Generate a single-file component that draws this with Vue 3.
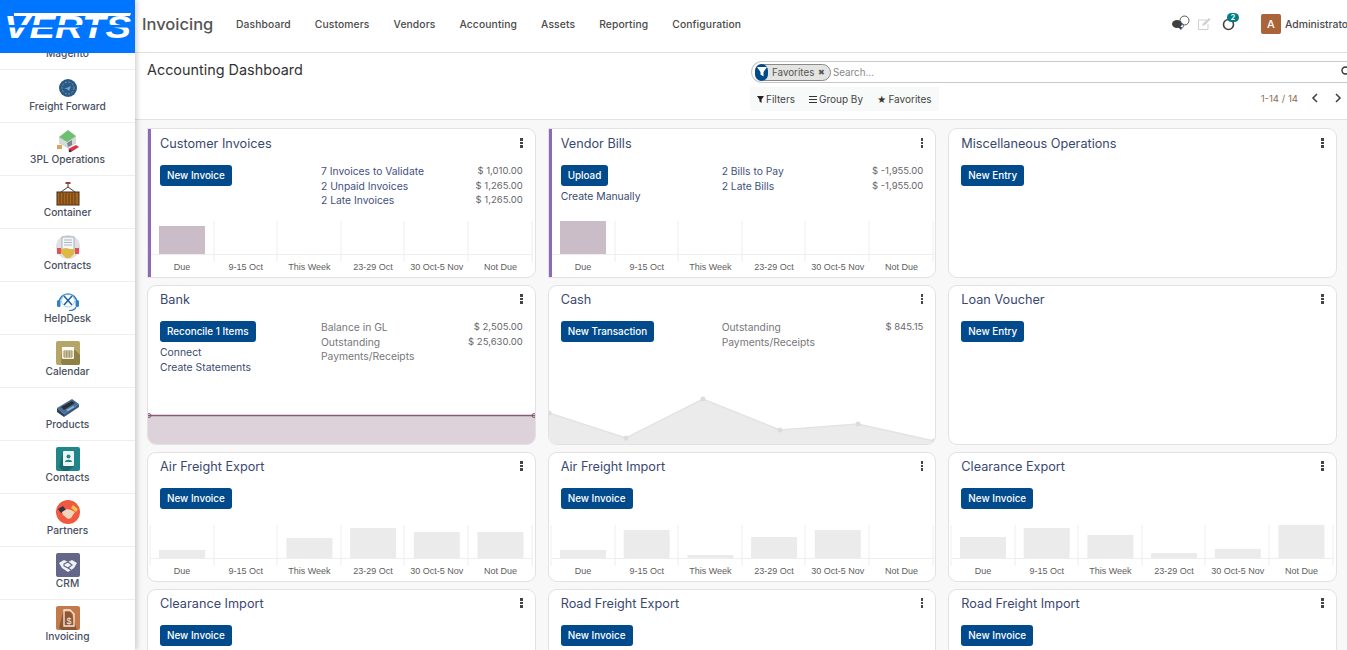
<template>
  <div class="app">
    <aside class="side">
      <div class="logo">
        <svg viewBox="0 0 135 53" width="135" height="53">
          <text x="4" y="38" textLength="127" lengthAdjust="spacingAndGlyphs" class="logo-text">VERTS</text>
          <rect x="0" y="25" width="135" height="2.500" fill="#0075ff" />
          <path d="M14 13h117l-1 3H14z" fill="#fff" />
        </svg>
      </div>
      <ul class="apps">
        <li v-for="item in apps" :key="item.name" class="app-item">
          <svg v-if="item.icon" class="app-icon" viewBox="0 0 24 24" width="24" height="24">
            <template v-if="item.icon === 'freight'">
              <circle cx="12" cy="12" r="9" fill="#245b8c" />
              <circle cx="12" cy="12" r="6" fill="none" stroke="#b59a68" stroke-width="0.8" stroke-dasharray="2 1.5" />
              <path d="M8 13l7-3-2 5-2-2z" fill="#7f9fbd" />
            </template>
            <template v-else-if="item.icon === '3pl'">
              <path d="M3 8l9-7 8 6v7l-8 5-9-5z" fill="#6fbf73" />
              <path d="M3 8l8 5 9-6v7l-8 5-9-5z" fill="#d5d9d8" />
              <path d="M11 14l5-3v5l-4 2z" fill="#7b8790" />
              <rect x="1" y="16" width="5" height="4" fill="#e0a255" />
              <path d="M12 20l8-4 3 2-8 5z" fill="#d8344a" />
              <circle cx="14" cy="22" r="1.3" fill="#333" />
            </template>
            <template v-else-if="item.icon === 'container'">
              <path d="M12 1v4M12 5L5 10M12 5l7 5" stroke="#4a3a32" stroke-width="1" fill="none" />
              <rect x="9.5" y="0" width="5" height="2" fill="#9c3f36" />
              <rect x="1" y="10" width="22" height="13" fill="#a8641f" stroke="#3a2a1c" />
              <path d="M4 11v11M7 11v11M10 11v11M13 11v11M16 11v11M19 11v11" stroke="#5f3a14" stroke-width="1" />
            </template>
            <template v-else-if="item.icon === 'contracts'">
              <circle cx="12" cy="12" r="12" fill="#dfe0e4" />
              <rect x="6" y="2" width="12" height="14" fill="#f5f6f7" stroke="#8a9aa8" stroke-width="0.7" />
              <path d="M8 5h8M8 7.5h8M8 10h8" stroke="#9fb0bd" stroke-width="0.9" />
              <rect x="1" y="13" width="4" height="6" fill="#e2505a" />
              <rect x="19" y="13" width="4" height="6" fill="#e2505a" />
              <path d="M5 14l5-1 4 1 5 0-1 5-4 4h-4l-5-5z" fill="#dcb845" />
            </template>
            <template v-else-if="item.icon === 'helpdesk'">
              <path d="M3 15a9 9 0 0 1 18 0" fill="none" stroke="#2f80c9" stroke-width="1.6" />
              <rect x="1" y="12" width="3.5" height="7" rx="1.5" fill="#2f80c9" />
              <rect x="19.5" y="12" width="3.5" height="7" rx="1.5" fill="#2f80c9" />
              <path d="M20 19c-1 3-4 3.500-7 3.500" fill="none" stroke="#2f80c9" stroke-width="1.200" />
              <path d="M8 8l8 9M16 8l-8 9" stroke="#1d5f9b" stroke-width="1.500" />
              <circle cx="12" cy="12.500" r="6.500" fill="none" stroke="#8fc0e8" stroke-width="0.800" />
            </template>
            <template v-else-if="item.icon === 'calendar'">
              <rect width="24" height="24" rx="2" fill="#b5a567" />
              <path d="M5 22L6 9h13l5 5v8a2 2 0 0 1-2 2H7z" fill="#8f8046" />
              <rect x="6" y="6" width="12" height="12" rx="1" fill="#f2efe2" />
              <rect x="6" y="6" width="12" height="2.500" fill="#fff" />
              <path d="M8 10h8v6H8zM8 12h8M8 14h8M10.700 10v6M13.300 10v6" fill="none" stroke="#8f8046" stroke-width="0.800" />
            </template>
            <template v-else-if="item.icon === 'products'">
              <path d="M1 14L16 5l7 5-15 10z" fill="#4a6f96" />
              <path d="M1 14l7 6v3l-7-5z" fill="#27405c" />
              <path d="M8 20l15-10v3L8 23z" fill="#34587d" />
              <path d="M5 13l11-6 3 2-11 7z" fill="#2d2d33" />
              <path d="M10 16l7-4 2 1-7 4z" fill="#85b5d8" />
            </template>
            <template v-else-if="item.icon === 'contacts'">
              <rect width="24" height="24" rx="2" fill="#21868a" />
              <path d="M3 20L7 5h11v14l-6 5H7z" fill="#196a6e" />
              <rect x="7" y="4" width="11" height="15" rx="1" fill="#eef4f4" />
              <circle cx="12.500" cy="9.500" r="2" fill="#21868a" />
              <path d="M9 15c0-3 7-3 7 0z" fill="#21868a" />
            </template>
            <template v-else-if="item.icon === 'partners'">
              <circle cx="12" cy="12" r="12" fill="#f0583f" />
              <path d="M2 9l5-3 3 4-5 3z" fill="#2f3342" />
              <path d="M17 5l5 4-2 3-5-4z" fill="#f5c84c" />
              <path d="M6 12l5-3 4 1 4 2-4 6-3 1-5-4z" fill="#f2d5bd" />
            </template>
            <template v-else-if="item.icon === 'crm'">
              <rect width="24" height="24" rx="2" fill="#646789" />
              <path d="M3 10l5-3 4 2 4-2 5 3-3 5-6 4-6-4z" fill="#f2f2f6" />
              <path d="M8 11l4-2 4 3-4 3-4-2zM12 15l3 2" fill="none" stroke="#646789" stroke-width="1.200" />
            </template>
            <template v-else-if="item.icon === 'invoicing'">
              <rect width="24" height="24" rx="2" fill="#c4794a" />
              <path d="M3 22L7 6h8l6 18H6z" fill="#8f5632" />
              <path d="M8 4h6l4 4v12H8z" fill="none" stroke="#f8ece3" stroke-width="1.300" />
              <text x="13" y="17.500" class="dollar">$</text>
            </template>
          </svg>
          <span class="app-name">{{ item.name }}</span>
        </li>
      </ul>
    </aside>

    <div class="main">
      <header class="topbar">
        <span class="brand">Invoicing</span>
        <nav class="nav">
          <a v-for="n in nav" :key="n">{{ n }}</a>
        </nav>
        <div class="systray">
          <svg width="20" height="18" viewBox="0 0 20 18">
            <circle cx="13.500" cy="5.500" r="4.500" fill="none" stroke="#555" stroke-width="1" />
            <ellipse cx="6" cy="9" rx="5" ry="4" fill="#3f3f3f" />
            <path d="M7 12l4 0-1 3z" fill="#3f3f3f" />
            <path d="M11 8c2 1 2 5-1 6" fill="none" stroke="#3f6f9a" stroke-width="1" />
          </svg>
          <svg class="edit" width="14" height="14" viewBox="0 0 14 14">
            <path d="M10 3H1.500v9.500H11V7" fill="none" stroke="#cfcfcf" stroke-width="1" />
            <path d="M5 9l1-2.500L12 1l1.500 1.500L8 8z" fill="#cfcfcf" />
          </svg>
          <span class="activity">
            <svg width="14" height="14" viewBox="0 0 14 14">
              <circle cx="6.500" cy="7.500" r="5" fill="none" stroke="#444" stroke-width="1.600" />
            </svg>
            <b class="badge">2</b>
          </span>
          <span class="user">
            <span class="avatar">A</span>
            <span class="user-name">Administrator</span>
          </span>
        </div>
      </header>

      <section class="panel">
        <h1 class="title">Accounting Dashboard</h1>
        <div class="panel-right">
          <div class="search">
            <span class="chip">
              <span class="chip-icon">
                <svg width="10" height="10" viewBox="0 0 10 10"><path d="M0 0h10L6.500 5v4.500l-3-2V5z" fill="#fff" /></svg>
              </span>
              <span class="chip-text">Favorites</span>
              <span class="chip-x">✖</span>
            </span>
            <span class="placeholder">Search...</span>
            <svg class="loupe" width="11" height="11" viewBox="0 0 11 11">
              <circle cx="4.500" cy="4.500" r="3.500" fill="none" stroke="#333" stroke-width="1.400" />
              <path d="M7 7l3 3" stroke="#333" stroke-width="1.400" />
            </svg>
          </div>
          <div class="tools">
            <div class="filters">
              <span class="filter">
                <svg width="7" height="7" viewBox="0 0 10 10"><path d="M0 0h10L6.500 5v5l-3-2V5z" fill="#222" /></svg>Filters
              </span>
              <span class="filter">
                <svg width="8" height="7" viewBox="0 0 8 7"><path d="M0 .500h8M0 3.500h8M0 6.500h8" stroke="#333" stroke-width="1" /></svg>Group By
              </span>
              <span class="filter"><i class="star">★</i>Favorites</span>
            </div>
            <div class="pager">
              <span class="pager-text">1-14 / 14</span>
              <svg width="7" height="10" viewBox="0 0 7 10"><path d="M6 1L2 5l4 4" fill="none" stroke="#444" stroke-width="1.600" /></svg>
              <svg width="7" height="10" viewBox="0 0 7 10"><path d="M1 1l4 4-4 4" fill="none" stroke="#444" stroke-width="1.600" /></svg>
            </div>
          </div>
        </div>
      </section>

      <section class="board">
        <article v-for="card in cards" :key="card.title" class="card" :class="{ accent: card.accent }">
          <div class="card-head">
            <span class="card-title">{{ card.title }}</span>
            <span class="kebab"><i></i><i></i><i></i></span>
          </div>
          <div class="card-body">
            <div class="card-left">
              <button class="btn">{{ card.action }}</button>
              <a v-for="l in card.links" :key="l" class="link">{{ l }}</a>
            </div>
            <div v-if="card.stats" class="card-right">
              <div v-for="s in card.stats" :key="s.label" class="stat" :class="{ muted: s.muted }">
                <span class="stat-label">{{ s.label }}</span>
                <span class="stat-val">{{ s.value }}</span>
              </div>
            </div>
          </div>

          <svg v-if="card.bars" class="chart" viewBox="0 0 387 57" width="387" height="57">
            <path v-for="x in ticks" :key="x" :d="`M${x} 0V41`" stroke="#eeeeee" />
            <path d="M2 33.500H384" stroke="#eeeeee" />
            <rect
              v-for="(h, i) in card.bars"
              :key="i"
              :x="11 + i * 63.7"
              :y="33 - h"
              width="46"
              :height="h"
              :fill="card.accent ? '#cbbdc8' : '#ebebeb'"
            />
            <text v-for="(l, i) in labels" :key="l" :x="34 + i * 63.7" y="49" class="chart-label">{{ l }}</text>
          </svg>

          <svg v-if="card.title === 'Bank'" class="chart" viewBox="0 0 387 50" width="387" height="50">
            <rect x="0" y="21" width="387" height="29" fill="#ddd2da" />
            <path d="M0 20.500H387" stroke="#875a7b" stroke-width="1.500" />
            <circle cx="1" cy="20.500" r="2" fill="none" stroke="#875a7b" />
            <circle cx="386" cy="20.500" r="2" fill="none" stroke="#875a7b" />
          </svg>

          <svg v-if="card.title === 'Cash'" class="chart" viewBox="0 0 387 50" width="387" height="50">
            <path :d="`M${cashLine} V50 H0 Z`" fill="#ebebeb" />
            <path :d="`M${cashLine}`" fill="none" stroke="#e3e3e3" stroke-width="1.500" />
            <circle v-for="p in cashPoints" :key="p[0]" :cx="p[0]" :cy="p[1]" r="2.500" fill="#dcdcdc" />
          </svg>
        </article>
      </section>
    </div>
  </div>
</template>

<script setup>
const apps = [
  { name: 'Magento' },
  { name: 'Freight Forward', icon: 'freight' },
  { name: '3PL Operations', icon: '3pl' },
  { name: 'Container', icon: 'container' },
  { name: 'Contracts', icon: 'contracts' },
  { name: 'HelpDesk', icon: 'helpdesk' },
  { name: 'Calendar', icon: 'calendar' },
  { name: 'Products', icon: 'products' },
  { name: 'Contacts', icon: 'contacts' },
  { name: 'Partners', icon: 'partners' },
  { name: 'CRM', icon: 'crm' },
  { name: 'Invoicing', icon: 'invoicing' },
]

const nav = ['Dashboard', 'Customers', 'Vendors', 'Accounting', 'Assets', 'Reporting', 'Configuration']

const labels = ['Due', '9-15 Oct', 'This Week', '23-29 Oct', '30 Oct-5 Nov', 'Not Due']
const ticks = [2, 66, 129, 193, 256, 320, 384]

const cashPoints = [[0, 18], [77, 43], [154, 4], [231, 35], [309, 29], [385, 46]]
const cashLine = cashPoints.map(p => p.join(' ')).join(' L')

const cards = [
  {
    title: 'Customer Invoices',
    accent: true,
    action: 'New Invoice',
    stats: [
      { label: '7 Invoices to Validate', value: '$ 1,010.00' },
      { label: '2 Unpaid Invoices', value: '$ 1,265.00' },
      { label: '2 Late Invoices', value: '$ 1,265.00' },
    ],
    bars: [28, 0, 0, 0, 0, 0],
  },
  {
    title: 'Vendor Bills',
    accent: true,
    action: 'Upload',
    links: ['Create Manually'],
    stats: [
      { label: '2 Bills to Pay', value: '$ -1,955.00' },
      { label: '2 Late Bills', value: '$ -1,955.00' },
    ],
    bars: [33, 0, 0, 0, 0, 0],
  },
  { title: 'Miscellaneous Operations', action: 'New Entry' },
  {
    title: 'Bank',
    action: 'Reconcile 1 Items',
    links: ['Connect', 'Create Statements'],
    stats: [
      { label: 'Balance in GL', value: '$ 2,505.00', muted: true },
      { label: 'Outstanding Payments/Receipts', value: '$ 25,630.00', muted: true },
    ],
  },
  {
    title: 'Cash',
    action: 'New Transaction',
    stats: [{ label: 'Outstanding Payments/Receipts', value: '$ 845.15', muted: true }],
  },
  { title: 'Loan Voucher', action: 'New Entry' },
  { title: 'Air Freight Export', action: 'New Invoice', bars: [8, 0, 20, 30, 26, 26] },
  { title: 'Air Freight Import', action: 'New Invoice', bars: [8, 28, 3, 21, 28, 0] },
  { title: 'Clearance Export', action: 'New Invoice', bars: [21, 30, 23, 5, 9, 33] },
  { title: 'Clearance Import', action: 'New Invoice' },
  { title: 'Road Freight Export', action: 'New Invoice' },
  { title: 'Road Freight Import', action: 'New Invoice' },
]
</script>

<style>
html,
body {
  overflow: hidden;
}
</style>

<style scoped>
.app {
  display: flex;
  height: 650px;
  overflow: hidden;
  font-family: Inter, "Noto Sans", sans-serif;
  color: #444;
  background: #f8f8f8;
}

.side {
  width: 135px;
  flex-shrink: 0;
  display: flex;
  flex-direction: column;
  background: #fff;
  box-shadow: 2px 0 5px rgba(0, 0, 0, 0.18);
  z-index: 2;
}

.logo {
  height: 53px;
  flex-shrink: 0;
  background: #0075ff;
  position: relative;
  z-index: 1;
}

.logo svg {
  display: block;
}

.logo-text {
  font-family: "Liberation Sans", sans-serif;
  font-size: 32px;
  font-weight: 700;
  font-style: italic;
  fill: #fff;
}

.apps {
  list-style: none;
  margin: -36px 0 0;
  padding: 0;
}

.app-item {
  height: 53px;
  box-sizing: border-box;
  border-bottom: 1px solid #eeeeee;
  display: flex;
  flex-direction: column;
  align-items: center;
  justify-content: flex-end;
  padding-bottom: 10px;
}

.app-name {
  font-size: 10.2px;
  font-weight: 500;
  line-height: 12px;
  color: #474f60;
  white-space: nowrap;
}

.dollar {
  font-family: "Liberation Sans", sans-serif;
  font-size: 9px;
  fill: #f8ece3;
  text-anchor: middle;
}

.main {
  flex: 1;
  min-width: 0;
  display: flex;
  flex-direction: column;
}

.topbar {
  height: 53px;
  box-sizing: border-box;
  flex-shrink: 0;
  display: flex;
  align-items: center;
  padding: 0 0 4px 7px;
  background: #fff;
  border-bottom: 1px solid #e2e2e6;
}

.brand {
  font-size: 16.500px;
  font-weight: 500;
  color: #555;
  width: 94px;
  flex-shrink: 0;
}

.nav {
  display: flex;
  gap: 24px;
  font-size: 10.300px;
  letter-spacing: 0.12px;
  font-weight: 500;
  color: #4a4a4a;
  white-space: nowrap;
}

.systray {
  margin-left: auto;
  display: flex;
  align-items: center;
}

.edit {
  margin-left: 6px;
}

.activity {
  position: relative;
  display: flex;
  margin-left: 11px;
}

.badge {
  position: absolute;
  top: -4px;
  left: 5px;
  width: 12px;
  height: 9px;
  border-radius: 5px;
  background: #017e84;
  color: #fff;
  font-size: 7px;
  line-height: 9px;
  text-align: center;
}

.user {
  display: flex;
  align-items: center;
  gap: 4px;
  width: 86px;
  margin-left: 25px;
  overflow: hidden;
}

.avatar {
  width: 20px;
  height: 20px;
  flex-shrink: 0;
  border-radius: 2px;
  background: #a9643a;
  color: #fff;
  font-size: 11px;
  font-weight: 500;
  line-height: 20px;
  text-align: center;
}

.user-name {
  font-size: 10.400px;
  font-weight: 500;
  color: #4a4a4a;
}

.panel {
  height: 67px;
  box-sizing: border-box;
  flex-shrink: 0;
  display: flex;
  background: #fff;
  border-bottom: 1px solid #e2e2e6;
  padding-left: 12px;
}

.title {
  width: 604px;
  flex-shrink: 0;
  margin: 8px 0 0;
  font-size: 14.400px;
  font-weight: 400;
  line-height: 18px;
  color: #333;
}

.panel-right {
  flex: 1;
  min-width: 0;
  padding-top: 8px;
}

.search {
  height: 22px;
  box-sizing: border-box;
  display: flex;
  align-items: center;
  border: 1px solid #c8c8c8;
  border-right: 0;
  border-radius: 11px 0 0 11px;
  padding-left: 3px;
  position: relative;
}

.chip {
  display: flex;
  align-items: center;
  height: 17px;
  width: 76px;
  flex-shrink: 0;
  box-sizing: border-box;
  border: 1px solid #8a8a8a;
  border-radius: 9px;
  background: #e4e4e2;
}

.chip-icon {
  width: 13px;
  height: 17px;
  margin-left: -1px;
  flex-shrink: 0;
  display: flex;
  align-items: center;
  justify-content: center;
  border-radius: 8px;
  background: #014a8c;
}

.chip-text {
  margin-left: 4px;
  font-size: 9.800px;
  color: #555;
}

.chip-x {
  margin-left: 4px;
  font-size: 8px;
  color: #555;
}

.placeholder {
  margin-left: 2px;
  font-size: 9.800px;
  color: #888;
}

.loupe {
  position: absolute;
  right: -5px;
  top: 4px;
}

.tools {
  display: flex;
  justify-content: space-between;
  align-items: center;
  margin-top: 4px;
}

.filters {
  display: flex;
  gap: 14px;
  height: 24px;
  align-items: center;
  padding: 0 7px;
  margin-left: -1px;
  background: #f8f9f9;
  font-size: 10px;
  color: #444;
}

.filter {
  display: flex;
  align-items: center;
  gap: 2px;
}

.star {
  font-style: normal;
  font-size: 9px;
  color: #333;
}

.pager {
  display: flex;
  align-items: center;
  gap: 17px;
  margin: -2px 5px 0 0;
}

.pager-text {
  font-size: 9.600px;
  color: #8b6f58;
  margin-right: -4px;
}

.board {
  flex: 1;
  display: grid;
  grid-template-columns: repeat(3, 1fr);
  grid-template-rows: 150px 160px 130px 130px;
  gap: 7px 12px;
  padding: 8px 10px 0 12px;
}

.card {
  position: relative;
  display: flex;
  flex-direction: column;
  min-width: 0;
  overflow: hidden;
  background: #fff;
  border: 1px solid #e2e2e2;
  border-radius: 9px;
}

.card.accent {
  border-radius: 0 9px 9px 0;
}

.card.accent::before {
  content: "";
  position: absolute;
  left: -1px;
  top: -1px;
  bottom: -1px;
  width: 4px;
  background: #8f68b8;
  z-index: 1;
}

.card-head {
  height: 35px;
  flex-shrink: 0;
  display: flex;
  justify-content: space-between;
  align-items: flex-start;
  padding: 6px 12px 0;
  box-sizing: border-box;
}

.card:nth-child(-n + 3) .card-head {
  height: 36px;
  padding-top: 7px;
}

.card-title {
  font-size: 12.700px;
  line-height: 16px;
  color: #3a4870;
  white-space: nowrap;
}

.kebab {
  display: flex;
  flex-direction: column;
  gap: 1px;
  margin: 2px 0 0;
}

.kebab i {
  width: 2.500px;
  height: 2.500px;
  background: #444;
}

.card-body {
  display: flex;
  padding: 0 12px;
}

.card-left {
  width: 161px;
  flex-shrink: 0;
  display: flex;
  flex-direction: column;
  align-items: flex-start;
}

.btn {
  height: 21px;
  padding: 0 7px;
  border: 0;
  border-radius: 3px;
  background: #014a8c;
  color: #fff;
  font: 500 9.900px/21px Inter, sans-serif;
  white-space: nowrap;
}

.link {
  font-size: 10.400px;
  line-height: 15px;
  color: #3a4a70;
}

.btn + .link {
  margin-top: 3px;
}

.card-right {
  flex: 1;
  min-width: 0;
  margin-top: -1px;
}

.stat {
  display: flex;
  justify-content: space-between;
  font-size: 10.300px;
  line-height: 14.500px;
  color: #3f5180;
}

.stat.muted {
  color: #77777a;
}

.stat-label {
  max-width: 120px;
}

.stat-val {
  color: #66666a;
  font-size: 9.500px;
  white-space: nowrap;
}

.chart {
  display: block;
  position: absolute;
  left: 0;
  bottom: -1px;
}

.chart-label {
  font-family: "Liberation Sans", sans-serif;
  font-size: 9px;
  fill: #606060;
  text-anchor: middle;
}
</style>
